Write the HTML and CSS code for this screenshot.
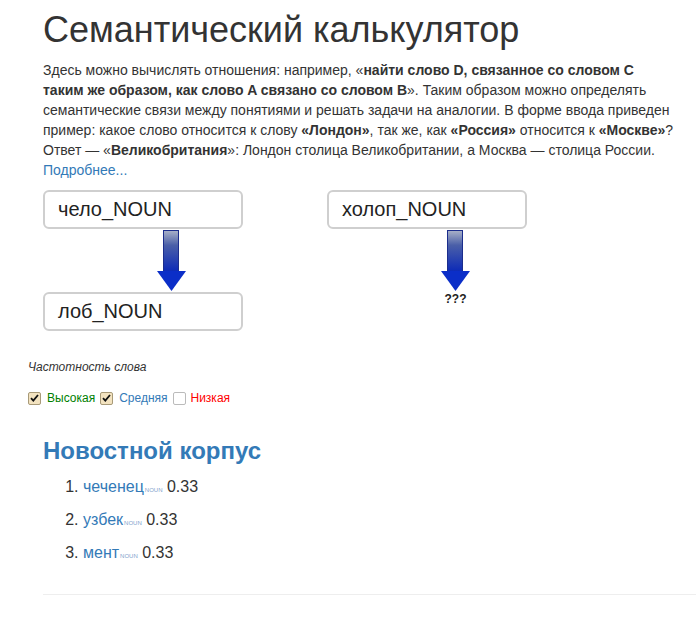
FILE: index.html
```html
<!DOCTYPE html>
<html lang="ru">
<head>
<meta charset="utf-8">
<title>Семантический калькулятор</title>
<link rel="stylesheet" href="styles.css">
</head>
<body>
<div class="page">
  <h1 class="title">Семантический калькулятор</h1>
  <p class="intro">Здесь можно вычислять отношения: например, «<b>найти слово D, связанное со словом C таким же образом, как слово A связано со словом B</b>». Таким образом можно определять семантические связи между понятиями и решать задачи на аналогии. В форме ввода приведен пример: какое слово относится к слову <b>«Лондон»</b>, так же, как <b>«Россия»</b> относится к <b>«Москве»</b>? Ответ — «<b>Великобритания</b>»: Лондон столица Великобритании, а Москва — столица России.<br><a class="link" href="#">Подробнее...</a></p>

  <div class="calc">
    <div class="col">
      <div class="field">чело_NOUN</div>
      <div class="arrow">
        <svg width="29" height="61" viewBox="0 0 29 61">
          <defs>
            <linearGradient id="g1" x1="0" y1="0" x2="0" y2="1">
              <stop offset="0" stop-color="#aab2c8"/>
              <stop offset="0.35" stop-color="#4a5fa8"/>
              <stop offset="1" stop-color="#0a28b8"/>
            </linearGradient>
          </defs>
          <rect x="6.5" y="0.5" width="15" height="42" fill="url(#g1)" stroke="#1b2d8c"/>
          <polygon points="0,41 29,41 14.5,61" fill="#0b2ec8"/>
        </svg>
      </div>
      <div class="field">лоб_NOUN</div>
    </div>
    <div class="col">
      <div class="field">холоп_NOUN</div>
      <div class="arrow">
        <svg width="29" height="61" viewBox="0 0 29 61">
          <defs>
            <linearGradient id="g2" x1="0" y1="0" x2="0" y2="1">
              <stop offset="0" stop-color="#aab2c8"/>
              <stop offset="0.35" stop-color="#4a5fa8"/>
              <stop offset="1" stop-color="#0a28b8"/>
            </linearGradient>
          </defs>
          <rect x="6.5" y="0.5" width="15" height="42" fill="url(#g2)" stroke="#1b2d8c"/>
          <polygon points="0,41 29,41 14.5,61" fill="#0b2ec8"/>
        </svg>
      </div>
      <div class="qqq">???</div>
    </div>
  </div>

  <div class="freq">
    <div class="freq-title">Частотность слова</div>
    <div class="freq-opts">
      <span class="cb checked"><svg width="9" height="8" viewBox="0 0 9 8"><path d="M1 4.2 L3.3 6.6 L8 1" fill="none" stroke="#111" stroke-width="1.8"/></svg></span>
      <span class="opt high">Высокая</span>
      <span class="cb checked"><svg width="9" height="8" viewBox="0 0 9 8"><path d="M1 4.2 L3.3 6.6 L8 1" fill="none" stroke="#111" stroke-width="1.8"/></svg></span>
      <span class="opt mid">Средняя</span>
      <span class="cb"></span>
      <span class="opt low">Низкая</span>
    </div>
  </div>

  <h2 class="corpus">Новостной корпус</h2>
  <ol class="results">
    <li><a class="word" href="#">чеченец<sub class="pos">NOUN</sub></a> 0.33</li>
    <li><a class="word" href="#">узбек<sub class="pos">NOUN</sub></a> 0.33</li>
    <li><a class="word" href="#">мент<sub class="pos">NOUN</sub></a> 0.33</li>
  </ol>
  <hr class="rule">
</div>
</body>
</html>
```
FILE: styles.css
```css
html, body {
  margin: 0;
  padding: 0;
  background: #fff;
}
body {
  font-family: "Liberation Sans", Arial, sans-serif;
  font-size: 14px;
  line-height: 20px;
  color: #333;
}
.page {
  padding-left: 43px;
  width: 653px;
}
.title {
  font-size: 36px;
  font-weight: normal;
  line-height: 39.6px;
  margin: 10px 0 10px;
  color: #333;
}
.intro {
  width: 635px;
  margin: 0 0 10px;
}
.intro b {
  font-weight: bold;
}
.link {
  color: #337ab7;
  text-decoration: none;
}
.calc {
  display: flex;
  gap: 84px;
  margin-top: 1px;
}
.col {
  width: 200px;
  display: flex;
  flex-direction: column;
}
.field {
  box-sizing: border-box;
  width: 200px;
  height: 39px;
  border: 2px solid #cfcfcf;
  border-radius: 6px;
  padding: 0 13px;
  font-size: 20px;
  line-height: 35px;
  color: #222;
}
.arrow {
  margin: 1px 0 1px 114px;
  width: 29px;
  height: 61px;
}
.arrow svg {
  display: block;
}
.qqq {
  margin-left: 114px;
  width: 29px;
  text-align: center;
  font-size: 12px;
  font-weight: bold;
  line-height: 14px;
  color: #222;
}
.freq {
  margin-left: -15px;
  margin-top: 28px;
  font-size: 12px;
  line-height: 17px;
}
.freq-title {
  font-style: italic;
  color: #333;
}
.freq-opts {
  margin-top: 14px;
  display: flex;
  align-items: center;
}
.cb {
  box-sizing: border-box;
  width: 13px;
  height: 13px;
  border: 1px solid #b6ab90;
  border-radius: 2px;
  background: #fff;
  display: inline-flex;
  align-items: center;
  justify-content: center;
  margin-right: 6px;
}
.cb.checked {
  background: #f3e3c0;
  border-color: #a89a78;
}
.cb:not(.checked) {
  border-color: #bbb;
}
.opt {
  margin-right: 5px;
}
.high { color: #008000; }
.mid { color: #337ab7; }
.low { color: #ff0000; margin-left: -1px; }
.corpus {
  font-size: 24px;
  font-weight: bold;
  line-height: 26.4px;
  color: #337ab7;
  margin: 31px 0 13px;
}
.results {
  margin: 0;
  padding-left: 40px;
  font-size: 16px;
  line-height: 20px;
}
.results li {
  margin-bottom: 13px;
}
.word {
  color: #337ab7;
  text-decoration: none;
}
.pos {
  font-size: 6px;
  line-height: 0;
  vertical-align: baseline;
  color: #7f9fcc;
  margin-left: 1px;
}
.rule {
  border: 0;
  border-top: 1px solid #eee;
  margin: 31px 0 0;
}
```
